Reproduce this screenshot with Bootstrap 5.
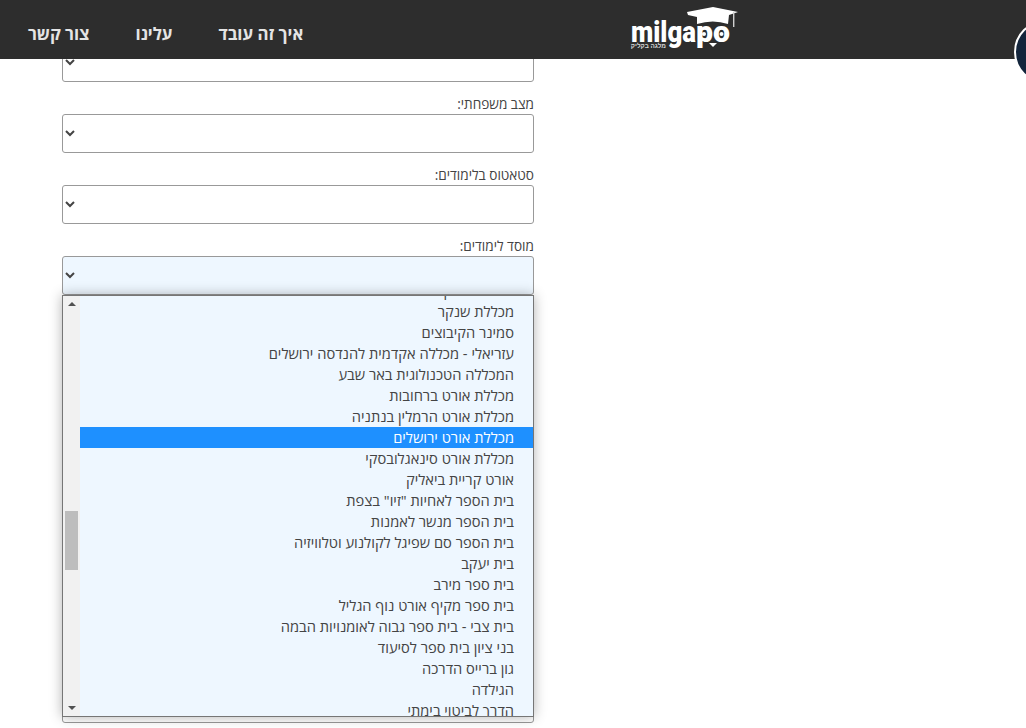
<!DOCTYPE html>
<html lang="he" dir="rtl">
<head>
<meta charset="utf-8">
<title>milgapo</title>
<link href="https://cdn.jsdelivr.net/npm/bootstrap@5.3.0/dist/css/bootstrap.min.css" rel="stylesheet">
<script src="https://cdn.jsdelivr.net/npm/bootstrap@5.3.0/dist/js/bootstrap.bundle.min.js"></script>
<style>
html,body{height:728px;overflow:hidden;background:#fff}
body{font-family:"Open Sans","Liberation Sans",sans-serif;color:#444;font-size:14px}
.top-strip{position:fixed;top:0;left:0;right:0;height:59px;background:#2d2d2d;z-index:10;direction:ltr;padding-left:28px}
.nav-txt{color:#e4e4e4;font-weight:700;font-size:16.8px;line-height:22px;text-decoration:none;direction:rtl}
.nav-row{gap:46px;padding-top:23px}
.logo-box{position:absolute;left:630px;top:5px;width:110px;height:44px}
.round-badge{position:absolute;left:1014px;top:20px;width:64px;height:64px;border-radius:50%;background:#13253c;border:2px solid #fff;z-index:11}
.form-area{width:472px;margin-left:62px;margin-right:auto;direction:rtl;position:relative}
.sheet{height:728px;direction:ltr;padding-top:43px}
.fld-label{display:block;font-size:13.6px;line-height:22px;height:20px;margin:0 0 1px;text-align:right;color:#444}
.fld-sel{display:block;width:100%;height:39px;border:1px solid #999;border-radius:3px;background:#fff;color:#444;font-size:14px;padding:0 2px;direction:rtl}
.fld-sel.is-open{background:#eef7ff}
.fld-group{margin-bottom:11px}
.fld-last{margin-top:389px}
.picker{position:absolute;left:0;top:252px;width:472px;height:422px;background:#eef7ff;border:1px solid #767676;box-shadow:0 0 12px rgba(0,0,0,.3);z-index:5;display:flex;direction:ltr;overflow:hidden}
.picker-bar{flex:0 0 17px;background:#f1f1f1;display:flex;flex-direction:column;align-items:center;justify-content:space-between;padding:6px 0 6px}
.picker-thumb{width:13px;height:59px;background:#bdbdbd;position:absolute;left:2px;top:215px}
.tri{width:0;height:0;border-left:4px solid transparent;border-right:4px solid transparent}
.tri-up{border-bottom:4px solid #505050}
.tri-down{border-top:4px solid #505050}
.picker-list{flex:1;direction:rtl;text-align:right;margin-top:-16px}
.picker-opt{height:21px;line-height:21px;font-size:14.67px;padding-right:19px;white-space:nowrap;color:#444}
.picker-opt.is-picked{background:#1e90ff;color:#fff}
</style>
</head>
<body>
<header class="top-strip">
  <nav class="d-flex nav-row" dir="ltr">
    <a class="nav-txt" href="#">צור קשר</a>
    <a class="nav-txt" href="#">עלינו</a>
    <a class="nav-txt" href="#">איך זה עובד</a>
  </nav>
  <svg class="logo-box" viewBox="0 0 110 44" aria-label="milgapo">
    <path d="M57 7 L83 2 L108 7 L99 10 L98 19 Q83 14 67 19 L67 12 L58 10 Z" fill="#fff"/>
    <rect x="103" y="7" width="1.4" height="15" fill="#cfcfcf"/>
    <text x="1" y="37" font-family="Roboto,'Open Sans',sans-serif" font-weight="900" font-size="29" fill="#fff" textLength="65" lengthAdjust="spacingAndGlyphs">milga</text>
    <text x="66" y="37" font-family="Roboto,'Open Sans',sans-serif" font-weight="900" font-size="30" fill="#fff" textLength="34" lengthAdjust="spacingAndGlyphs">po</text>
    <circle cx="74" cy="29" r="2" fill="#fff"/>
    <circle cx="91.5" cy="29" r="2" fill="#fff"/>
    <path d="M79 38 L87 38 L83 42 Z" fill="#fff"/>
    <text x="36" y="43" direction="rtl" font-family="'Liberation Sans',sans-serif" font-size="6.4" font-weight="700" fill="#d8d8d8">מלגה בקליק</text>
  </svg>
</header>
<div class="round-badge"></div>
<main class="sheet">
  <form class="form-area">
    <div class="fld-group"><select class="fld-sel"><option></option></select></div>
    <div class="fld-group"><label class="fld-label">מצב משפחתי:</label><select class="fld-sel"><option></option></select></div>
    <div class="fld-group"><label class="fld-label">סטאטוס בלימודים:</label><select class="fld-sel"><option></option></select></div>
    <div class="fld-group"><label class="fld-label">מוסד לימודים:</label><select class="fld-sel is-open"><option></option></select></div>
    <div class="fld-last"><select class="fld-sel"><option></option></select></div>
    <div class="picker">
      <div class="picker-bar"><span class="tri tri-up"></span><span class="picker-thumb"></span><span class="tri tri-down"></span></div>
      <div class="picker-list">
        <div class="picker-opt">מכללת רופין</div>
        <div class="picker-opt">מכללת שנקר</div>
        <div class="picker-opt">סמינר הקיבוצים</div>
        <div class="picker-opt">עזריאלי - מכללה אקדמית להנדסה ירושלים</div>
        <div class="picker-opt">המכללה הטכנולוגית באר שבע</div>
        <div class="picker-opt">מכללת אורט ברחובות</div>
        <div class="picker-opt">מכללת אורט הרמלין בנתניה</div>
        <div class="picker-opt is-picked">מכללת אורט ירושלים</div>
        <div class="picker-opt">מכללת אורט סינאגלובסקי</div>
        <div class="picker-opt">אורט קריית ביאליק</div>
        <div class="picker-opt">בית הספר לאחיות "זיו" בצפת</div>
        <div class="picker-opt">בית הספר מנשר לאמנות</div>
        <div class="picker-opt">בית הספר סם שפיגל לקולנוע וטלוויזיה</div>
        <div class="picker-opt">בית יעקב</div>
        <div class="picker-opt">בית ספר מירב</div>
        <div class="picker-opt">בית ספר מקיף אורט נוף הגליל</div>
        <div class="picker-opt">בית צבי - בית ספר גבוה לאומנויות הבמה</div>
        <div class="picker-opt">בני ציון בית ספר לסיעוד</div>
        <div class="picker-opt">גון ברייס הדרכה</div>
        <div class="picker-opt">הגילדה</div>
        <div class="picker-opt">הדרך לביטוי בימתי</div>
      </div>
    </div>
  </form>
</main>
</body>
</html>
